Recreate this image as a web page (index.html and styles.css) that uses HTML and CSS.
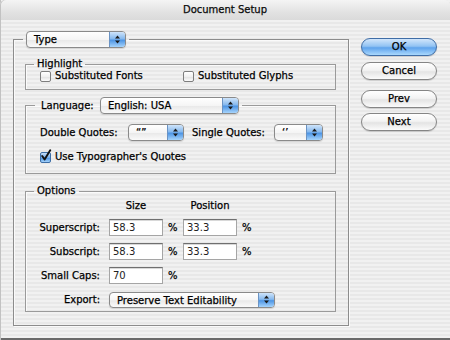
FILE: index.html
```html
<!DOCTYPE html>
<html lang="en">
<head>
  <meta charset="UTF-8">
  <title>Document Setup</title>
  <link rel="stylesheet" href="styles.css">
</head>
<body>
  <div class="window">
    <div class="titlebar">Document Setup</div>
    <div class="dialog">
      <fieldset class="panel">
        <legend class="panel-legend">
          <div class="popup popup-type">
            <span class="popup-text">Type</span>
            <span class="popup-arrows"><svg width="7" height="11" viewBox="0 0 7 11"><path d="M1 4.5 3.5 1.5 6 4.5Z M1 6.5 3.5 9.5 6 6.5Z" fill="#1a1a1a"/></svg></span>
          </div>
        </legend>
        <div class="panel-body">

          <fieldset class="group">
            <legend class="group-legend">Highlight</legend>
            <div class="group-body highlight-body">
              <label class="check check-first"><span class="box"></span>Substituted Fonts</label>
              <label class="check"><span class="box"></span>Substituted Glyphs</label>
            </div>
          </fieldset>

          <fieldset class="group group-lang">
            <legend class="lang-legend">
              <span class="lang-label">Language:</span>
              <div class="popup popup-lang">
                <span class="popup-text">English: USA</span>
                <span class="popup-arrows"><svg width="7" height="11" viewBox="0 0 7 11"><path d="M1 4.5 3.5 1.5 6 4.5Z M1 6.5 3.5 9.5 6 6.5Z" fill="#1a1a1a"/></svg></span>
              </div>
            </legend>
            <div class="group-body lang-body">
              <div class="quotes-row">
                <span class="quote-label dq-label">Double Quotes:</span>
                <div class="popup popup-dq">
                  <span class="popup-text">“”</span>
                  <span class="popup-arrows"><svg width="7" height="11" viewBox="0 0 7 11"><path d="M1 4.5 3.5 1.5 6 4.5Z M1 6.5 3.5 9.5 6 6.5Z" fill="#1a1a1a"/></svg></span>
                </div>
                <span class="quote-label sq-label">Single Quotes:</span>
                <div class="popup popup-sq">
                  <span class="popup-text">‘’</span>
                  <span class="popup-arrows"><svg width="7" height="11" viewBox="0 0 7 11"><path d="M1 4.5 3.5 1.5 6 4.5Z M1 6.5 3.5 9.5 6 6.5Z" fill="#1a1a1a"/></svg></span>
                </div>
              </div>
              <label class="check typo-row">
                <span class="box box-on"><svg width="12" height="13" viewBox="0 0 12 13"><path d="M2.2 7 4.6 10.4 10.2 1.2" stroke="#111" stroke-width="1.9" fill="none" stroke-linecap="round" stroke-linejoin="round"/></svg></span>Use Typographer's Quotes
              </label>
            </div>
          </fieldset>

          <fieldset class="group group-opts">
            <legend class="group-legend">Options</legend>
            <div class="group-body opts-grid">
              <span></span>
              <span class="col-head">Size</span>
              <span></span>
              <span class="col-head">Position</span>
              <span></span>
              <span></span>

              <span class="opt-label">Superscript:</span>
              <span class="field">58.3</span>
              <span class="pct">%</span>
              <span class="field">33.3</span>
              <span class="pct">%</span>
              <span></span>

              <span class="opt-label">Subscript:</span>
              <span class="field">58.3</span>
              <span class="pct">%</span>
              <span class="field">33.3</span>
              <span class="pct">%</span>
              <span></span>

              <span class="opt-label">Small Caps:</span>
              <span class="field">70</span>
              <span class="pct">%</span>
              <span></span>
              <span></span>
              <span></span>

              <span class="opt-label">Export:</span>
              <div class="popup popup-export">
                <span class="popup-text">Preserve Text Editability</span>
                <span class="popup-arrows"><svg width="7" height="11" viewBox="0 0 7 11"><path d="M1 4.5 3.5 1.5 6 4.5Z M1 6.5 3.5 9.5 6 6.5Z" fill="#1a1a1a"/></svg></span>
              </div>
            </div>
          </fieldset>

        </div>
      </fieldset>

      <div class="buttons">
        <div class="btn btn-default">OK</div>
        <div class="btn btn-cancel">Cancel</div>
        <div class="btn btn-prev">Prev</div>
        <div class="btn btn-next">Next</div>
      </div>
    </div>
  </div>
</body>
</html>
```

FILE: styles.css
```css
body {
  margin: 0;
  font-family: "DejaVu Sans", "Liberation Sans", sans-serif;
  font-size: 10px;
  color: #000;
  -webkit-text-stroke: 0.25px #000;
}
.window {
  width: 450px;
  height: 340px;
  box-sizing: border-box;
  background: repeating-linear-gradient(to bottom, #f1f1f1 0 2px, #e8e8e8 2px 4px);
  box-shadow: inset 1px 0 0 #c2c2c2, inset 0 -2px 0 #6a6a6a;
  display: flex;
  flex-direction: column;
}
.titlebar {
  height: 20px;
  line-height: 19px;
  text-align: center;
  color: #111;
  background: linear-gradient(#f4f4f4, #e2e2e2 60%, #dadada);
  border-radius: 5px 5px 0 0;
  box-shadow: inset 1px 0 0 #c2c2c2;
}
.dialog {
  display: flex;
  align-items: flex-start;
  padding: 11px 0 0 13px;
}

/* group boxes */
.panel {
  width: 336px;
  box-sizing: border-box;
  margin: 0;
  padding: 0;
  min-width: 0;
  border: 1px solid #8c8c8c;
  box-shadow: 1px 1px 0 #fafafa, inset 1px 1px 0 #fafafa;
}
.panel-legend {
  margin-left: 9px;
  padding: 0 3px;
}
.panel-body {
  padding: 10px 12px 13px 11px;
}
.group {
  margin: 0;
  padding: 0;
  min-width: 0;
  border: 1px solid #9a9a9a;
  box-shadow: inset 1px 1px 0 #fbfbfb;
}
.group-legend {
  margin-left: 8px;
  padding: 0 3px;
  line-height: 12px;
}
.group-lang {
  margin-top: 7px;
}
.group-opts {
  margin-top: 11px;
}

/* checkboxes */
.highlight-body {
  display: flex;
  align-items: center;
  padding: 0 0 7px 14px;
  line-height: 12px;
}
.check {
  display: flex;
  align-items: center;
  line-height: 12px;
  white-space: nowrap;
}
.check-first {
  width: 143px;
}
.box {
  position: relative;
  width: 11px;
  height: 11px;
  box-sizing: border-box;
  margin-right: 4px;
  border: 1px solid #7d7d7d;
  border-radius: 2px;
  background: linear-gradient(#ffffff, #f0f0f0 50%, #e2e2e2 55%, #fbfbfb);
  flex: none;
}
.box-on {
  border-color: #3d6ea6;
  background: linear-gradient(#c6def8, #78b0ee 50%, #4a92e2 55%, #a4d2fb);
}
.box-on svg {
  position: absolute;
  left: -1px;
  top: -4px;
}

/* language */
.lang-legend {
  display: flex;
  align-items: center;
  margin-left: 9px;
  padding: 0 3px 0 6px;
}
.lang-label {
  width: 59px;
}
.lang-body {
  padding: 10px 0 10px 14px;
}
.quotes-row {
  display: flex;
  align-items: center;
  height: 17px;
}
.dq-label {
  width: 88px;
}
.sq-label {
  width: 82px;
  margin-left: 8px;
}
.typo-row {
  margin-top: 10px;
}

/* popup menus */
.popup {
  display: flex;
  height: 17px;
  box-sizing: border-box;
  border: 1px solid #8a8a8a;
  border-radius: 4px;
  overflow: hidden;
  background: linear-gradient(#ffffff, #f5f5f5 50%, #e9e9e9 55%, #fafafa);
  box-shadow: 0 1px 1px rgba(0, 0, 0, 0.12);
}
.popup-text {
  flex: 1;
  padding-left: 7px;
  line-height: 15px;
  white-space: nowrap;
  overflow: hidden;
}
.popup-arrows {
  width: 15px;
  display: flex;
  align-items: center;
  justify-content: center;
  border-left: 1px solid #6a93c4;
  background: linear-gradient(#cfe4fa, #86b9ee 45%, #4e95e4 55%, #a6d4fc);
}
.popup-type {
  width: 100px;
}
.popup-lang {
  width: 139px;
}
.popup-dq {
  width: 56px;
}
.popup-sq {
  width: 49px;
}
.popup-export {
  grid-column: 2 / -1;
  justify-self: start;
  width: 166px;
  height: 16px;
}

/* options grid */
.opts-grid {
  display: grid;
  grid-template-columns: 83px 54px 20px 54px 20px 1fr;
  grid-template-rows: 12px 17px 17px 17px 17px;
  row-gap: 7px;
  align-items: center;
  padding: 3px 0 3px 0;
}
.col-head {
  text-align: center;
  line-height: 12px;
}
.opt-label {
  text-align: right;
  padding-right: 9px;
  white-space: nowrap;
}
.field {
  height: 17px;
  box-sizing: border-box;
  padding-left: 3px;
  line-height: 15px;
  color: #222;
  -webkit-text-stroke: 0;
  background: #fff;
  border: 1px solid #a5a5a5;
  border-top-color: #6f6f6f;
  box-shadow: inset 0 1px 0 #d8d8d8;
}
.pct {
  padding-left: 5px;
}

/* push buttons */
.buttons {
  display: flex;
  flex-direction: column;
  margin: 7px 0 0 12px;
  width: 76px;
}
.btn {
  height: 18px;
  box-sizing: border-box;
  line-height: 16px;
  text-align: center;
  border: 1px solid #858585;
  border-radius: 9px;
  background: linear-gradient(#ffffff, #f3f3f3 45%, #e4e4e4 55%, #fbfbfb);
  box-shadow: 0 1px 1px rgba(0, 0, 0, 0.15);
}
.btn-default {
  border-color: #3f6da6;
  background: linear-gradient(#d2e6fb, #92c3f3 45%, #5fa3ec 55%, #a9d8fd);
}
.btn-cancel {
  margin-top: 6px;
}
.btn-prev {
  margin-top: 10px;
}
.btn-next {
  margin-top: 5px;
}
```
